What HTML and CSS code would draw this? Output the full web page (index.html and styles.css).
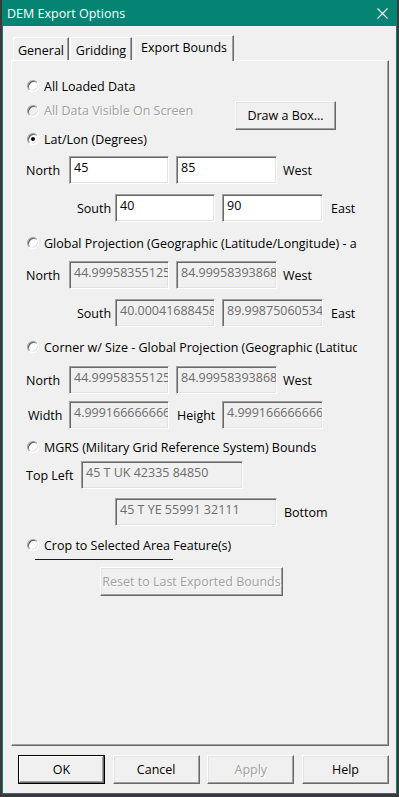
FILE: index.html
```html
<!DOCTYPE html>
<html lang="en">
<head>
  <meta charset="UTF-8" />
  <title>DEM Export Options</title>
  <link rel="stylesheet" href="styles.css">
</head>
<body>

<div class="window">
  <div class="titlebar">
    <span class="title">DEM Export Options</span>
    <svg class="close" width="11" height="11" viewBox="0 0 11 11">
      <path d="M0.5 0.5 L10.5 10.5 M10.5 0.5 L0.5 10.5" stroke="#fff" stroke-width="1.1" fill="none"/>
    </svg>
  </div>

  <div class="client">
    <div class="tabs">
      <div class="tab tab-general">General</div>
      <div class="tab tab-gridding">Gridding</div>
      <div class="tab active">Export Bounds</div>
    </div>

    <div class="panel">
      <div class="radio-row">
        <span class="radio"></span>
        <span class="radio-text">All Loaded Data</span>
      </div>

      <div class="radio-row row-box">
        <span class="radio disabled"></span>
        <span class="radio-text dim">All Data Visible On Screen</span>
        <button class="btn draw-box">Draw a Box...</button>
      </div>

      <div class="radio-row row-latlon">
        <span class="radio checked"></span>
        <span class="radio-text">Lat/Lon (Degrees)</span>
      </div>

      <div class="field-row row-north1">
        <span class="lbl lbl-north">North</span>
        <div class="edit w100">45</div>
        <div class="edit w101 gap7">85</div>
        <span class="lbl after6">West</span>
      </div>

      <div class="field-row row-south">
        <span class="lbl lbl-south">South</span>
        <div class="edit w100">40</div>
        <div class="edit w101 gap7">90</div>
        <span class="lbl after8">East</span>
      </div>

      <div class="radio-row row-global">
        <span class="radio"></span>
        <span class="radio-text">Global Projection (Geographic (Latitude/Longitude) - all</span>
      </div>

      <div class="field-row row-north2">
        <span class="lbl lbl-north">North</span>
        <div class="edit off w100">44.9995835512586</div>
        <div class="edit off w101 gap7">84.9995839386833</div>
        <span class="lbl after6">West</span>
      </div>

      <div class="field-row row-south">
        <span class="lbl lbl-south">South</span>
        <div class="edit off w100">40.0004168845833</div>
        <div class="edit off w101 gap7">89.9987506053416</div>
        <span class="lbl after8">East</span>
      </div>

      <div class="radio-row row-corner">
        <span class="radio"></span>
        <span class="radio-text">Corner w/ Size - Global Projection (Geographic (Latitude/Longitude))</span>
      </div>

      <div class="field-row row-north3">
        <span class="lbl lbl-north">North</span>
        <div class="edit off w100">44.9995835512586</div>
        <div class="edit off w101 gap7">84.9995839386833</div>
        <span class="lbl after6">West</span>
      </div>

      <div class="field-row row-width">
        <span class="lbl lbl-width">Width</span>
        <div class="edit off w100">4.99916666666667</div>
        <span class="lbl lbl-height">Height</span>
        <div class="edit off w101">4.99916666666667</div>
      </div>

      <div class="radio-row row-mgrs">
        <span class="radio"></span>
        <span class="radio-text">MGRS (Military Grid Reference System) Bounds</span>
      </div>

      <div class="field-row row-topleft">
        <span class="lbl lbl-topleft">Top Left</span>
        <div class="edit off w162">45 T UK 42335 84850</div>
      </div>

      <div class="field-row row-bottom">
        <div class="edit off w162">45 T YE 55991 32111</div>
        <span class="lbl after7">Bottom</span>
      </div>

      <div class="radio-row row-crop">
        <span class="radio"></span>
        <span class="radio-text">Crop to Selected Area Feature(s)</span>
      </div>

      <div class="rule"></div>

      <button class="btn reset" disabled>Reset to Last Exported Bounds</button>
    </div>

    <div class="buttons">
      <button class="btn dlg default">OK</button>
      <button class="btn dlg">Cancel</button>
      <button class="btn dlg" disabled>Apply</button>
      <button class="btn dlg">Help</button>
    </div>
  </div>
</div>

</body>
</html>
```

FILE: styles.css
```css
:root {
  --face: #f0f0f0;
  --title: #058474;
  --shade: #696969;
  --shade-light: #a0a0a0;
  --hi: #ffffff;
  --text-dim: #a0a0a0;
  --text-off: #6d6d6d;
}

* {
  margin: 0;
  padding: 0;
  box-sizing: border-box;
}

body {
  font-family: 'Open Sans', 'Noto Sans', sans-serif;
  font-size: 12px;
  color: #000;
  background: #3a3a3a;
  width: 399px;
  height: 797px;
  overflow: hidden;
}

.window {
  margin-left: 2px;
  width: 395px;
  height: 794px;
  background: var(--face);
  border: 1px solid var(--title);
  border-top: none;
  display: flex;
  flex-direction: column;
}

.titlebar {
  height: 26px;
  background: var(--title);
  color: #fff;
  display: flex;
  align-items: center;
  justify-content: space-between;
  padding: 0 9px 0 4px;
  margin: 0 -1px;
}

.title {
  font-size: 12.5px;
  padding-left: 1px;
}

.close {
  display: block;
}

.client {
  flex: 1;
  padding: 9px 0 0 8px;
}

/* tabs */

.tabs {
  display: flex;
  align-items: flex-end;
  padding-left: 2px;
  height: 25px;
  position: relative;
  z-index: 1;
}

.tab {
  height: 23px;
  margin-right: 1px;
  border-top: 1px solid var(--hi);
  border-left: 1px solid var(--hi);
  border-right: 1px solid var(--shade);
  box-shadow: inset -1px 0 var(--shade-light);
  display: flex;
  align-items: center;
  justify-content: center;
  padding-top: 2px;
  font-size: 12.5px;
  white-space: nowrap;
}

.tab-general { width: 56px; }
.tab-gridding { width: 62px; }

.tab.active {
  width: 100px;
  height: 26px;
  margin-left: 1px;
  margin-bottom: -1px;
  padding: 0 0 3px 0;
  background: var(--face);
}

.panel {
  width: 378px;
  height: 686px;
  border: 1px solid;
  border-color: var(--hi) var(--shade) var(--shade) var(--hi);
  box-shadow: inset -1px -1px var(--shade-light);
  padding: 15px 0 0 14px;
}

/* radio rows */

.radio-row {
  display: flex;
  align-items: center;
  height: 20px;
  padding-left: 1px;
}

.radio {
  width: 12px;
  height: 12px;
  border-radius: 50%;
  background: #fff;
  border: 1px solid;
  border-color: var(--shade-light) #fff #fff var(--shade-light);
  box-shadow: inset 1px 1px #5a5a5a, inset -1px -1px #e3e3e3;
  margin-right: 5px;
  flex: none;
  position: relative;
}

.radio.disabled {
  background: var(--face);
}

.radio.checked::after {
  content: '';
  position: absolute;
  left: 3px;
  top: 3px;
  width: 4px;
  height: 4px;
  border-radius: 50%;
  background: #000;
}

.radio-text {
  max-width: 313px;
  overflow: hidden;
  white-space: nowrap;
  font-size: 12.5px;
}

.dim {
  color: var(--text-dim);
  text-shadow: 1px 1px #fff;
}

.row-box {
  height: 29px;
  margin-top: 5px;
  align-items: flex-start;
}

.row-box .radio {
  margin-top: 4px;
}

.row-box .radio-text {
  line-height: 20px;
}

.draw-box {
  margin-left: auto;
  margin-right: 52px;
  width: 101px;
  height: 29px;
}

.row-latlon { margin-top: -1px; }
.row-north1 { margin-top: 7px; }
.row-south { margin-top: 10px; }
.row-global { margin-top: 11px; }
.row-north2 { margin-top: 8px; }
.row-corner { margin-top: 10px; }
.row-north3 { margin-top: 9px; }
.row-width { margin-top: 7px; }
.row-mgrs { margin-top: 8px; }
.row-topleft { margin-top: 4px; }
.row-bottom { margin-top: 9px; padding-left: 89px; }
.row-crop { margin-top: 9px; }

/* fields */

.field-row {
  display: flex;
  align-items: center;
  height: 28px;
}

.lbl {
  font-size: 12.5px;
  white-space: nowrap;
}

.lbl-north { width: 43px; }
.lbl-width { width: 43px; padding-left: 2px; }
.lbl-topleft { width: 55px; }
.lbl-height { width: 45px; margin-left: 8px; }

.row-south { padding-left: 51px; }
.lbl-south { width: 38px; }

.after6 { margin-left: 6px; }
.after7 { margin-left: 7px; }
.after8 { margin-left: 8px; }
.gap7 { margin-left: 7px; }

.edit {
  height: 28px;
  background: #fff;
  border: 1px solid;
  border-color: var(--shade-light) #fff #fff var(--shade-light);
  box-shadow: inset 1px 1px var(--shade), inset -1px -1px #e3e3e3;
  padding: 2px 0 0 4px;
  font-size: 12.5px;
  line-height: 17px;
  white-space: nowrap;
  overflow: hidden;
  flex: none;
}

.edit.off {
  background: var(--face);
  color: var(--text-off);
}

.w100 { width: 100px; }
.w101 { width: 101px; }
.w162 { width: 162px; }

.rule {
  margin: 4px 0 0 9px;
  width: 138px;
  height: 1px;
  background: #1a1a1a;
}

/* buttons */

.btn {
  font-family: inherit;
  font-size: 12.5px;
  color: #000;
  background: var(--face);
  border: 1px solid;
  border-color: var(--hi) var(--shade) var(--shade) var(--hi);
  box-shadow: inset -1px -1px var(--shade-light), inset 1px 1px #e3e3e3;
  flex: none;
}

.btn:disabled {
  color: var(--text-dim);
  text-shadow: 1px 1px #fff;
}

.reset {
  display: block;
  margin: 7px 0 0 74px;
  width: 183px;
  height: 29px;
}

.buttons {
  display: flex;
  justify-content: space-between;
  margin: 9px 0 0 7px;
  width: 371px;
}

.dlg {
  width: 87px;
  height: 29px;
}

.dlg.default {
  border-color: #000;
  box-shadow: inset -1px -1px var(--shade), inset 1px 1px #fff, inset -2px -2px var(--shade-light);
}
```
